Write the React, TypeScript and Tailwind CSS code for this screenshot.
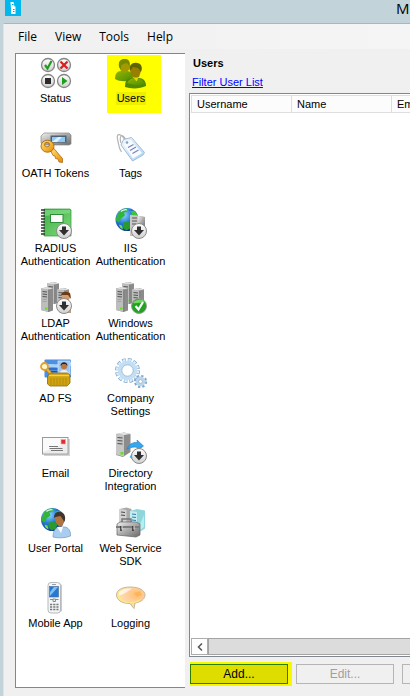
import type { ReactNode } from "react";

function Defs() {
  return (
    <svg width="0" height="0" className="absolute" aria-hidden="true">
      <defs>
        <linearGradient id="metal" x1="0" y1="0" x2="1" y2="1">
          <stop offset="0" stopColor="#f1f1f1" />
          <stop offset="0.5" stopColor="#a9a9a9" />
          <stop offset="1" stopColor="#6a6a6a" />
        </linearGradient>
        <linearGradient id="silver" x1="0" y1="0" x2="0" y2="1">
          <stop offset="0" stopColor="#ffffff" />
          <stop offset="1" stopColor="#cfcfcf" />
        </linearGradient>
        <linearGradient id="ice" x1="0" y1="0" x2="1" y2="1">
          <stop offset="0" stopColor="#f4faff" />
          <stop offset="1" stopColor="#a9d2f2" />
        </linearGradient>
        <linearGradient id="gold" x1="0" y1="0" x2="1" y2="1">
          <stop offset="0" stopColor="#ffe37a" />
          <stop offset="1" stopColor="#e88a00" />
        </linearGradient>
        <linearGradient id="book" x1="0" y1="0" x2="1" y2="1">
          <stop offset="0" stopColor="#3fae49" />
          <stop offset="1" stopColor="#7fdc78" />
        </linearGradient>
        <linearGradient id="shirt" x1="0" y1="0" x2="1" y2="1">
          <stop offset="0" stopColor="#8fb800" />
          <stop offset="1" stopColor="#4f8a00" />
        </linearGradient>
        <radialGradient id="ocean" cx="0.35" cy="0.3" r="0.75">
          <stop offset="0" stopColor="#8fd8ff" />
          <stop offset="0.5" stopColor="#2479d8" />
          <stop offset="1" stopColor="#0b2f87" />
        </radialGradient>
        <radialGradient id="speech" cx="0.7" cy="0.35" r="0.8">
          <stop offset="0" stopColor="#ffbf6b" />
          <stop offset="0.5" stopColor="#ffd2a6" />
          <stop offset="1" stopColor="#fdf48c" />
        </radialGradient>
      </defs>
    </svg>
  );
}

function Icon({ children }: { children: ReactNode }) {
  return (
    <svg viewBox="0 0 32 32" className="h-8 w-8 shrink-0" aria-hidden="true">
      {children}
    </svg>
  );
}

function DownBadge() {
  return (
    <g>
      <circle cx="24" cy="24" r="7.500" fill="url(#silver)" stroke="#8a8a8a" />
      <path d="M22 19.500h4V23h3l-5 5.500L19 23h3z" fill="#2f2f2f" />
    </g>
  );
}

function Server({ x, y, h }: { x: number; y: number; h: number }) {
  return (
    <g transform={`translate(${x} ${y})`}>
      <path d={`M0 1.500L7 0l5 1.500v${h - 3}L7.500 ${h}L0 ${h - 2}z`} fill="#8b8b8b" />
      <path d={`M0 1.500L7.500 2.500V${h}L0 ${h - 2}z`} fill="#bdbdbd" />
      <path d="M0 1.500L6 0l6 1.500l-4.500 1z" fill="#dedede" />
      <path d="M1.500 4.500l4.500.5M1.500 7l4.500.5M1.500 9.500l4.500.5" stroke="#555" strokeWidth="1.100" />
      <path d={`M7.700 2.500V${h}`} stroke="#666" strokeWidth="0.600" />
      <path d="M1.500 12.500h4M1.500 14.500h4" stroke="#9a9a9a" strokeWidth="0.800" />
      <rect x="4" y={h - 4.5} width="2.500" height="2" fill="#62e21c" />
    </g>
  );
}

function Globe({ cx, cy }: { cx: number; cy: number }) {
  return (
    <g transform={`translate(${cx} ${cy})`}>
      <circle r="11.500" fill="url(#ocean)" />
      <path d="M-9-6C-7-10-2-11.500 1-11L0-8l-3 1 1 3-4 3-2 4-3-2c-.5-2 0-4 2-5z" fill="#35b43a" />
      <path d="M3-8l4-1c3 2 4 5 4 8l-3 3-4-2-1-4 2-2z" fill="#43c23c" />
      <path d="M-4 3l5-1 4 3-2 4-4 2-3-3z" fill="#299b2e" />
      <path d="M-8 5l3 1 1 4-3-2z" fill="#6ede4d" />
      <path d="M-6-8C-4-10-1-10 0-9.500" fill="none" stroke="#d9ffd0" strokeWidth="1.200" />
    </g>
  );
}

const statusIcon = (
  <Icon>
    {[
      [8, 8],
      [24, 8],
      [8, 24],
      [24, 24],
    ].map(([x, y]) => (
      <circle key={`${x}-${y}`} cx={x} cy={y} r="6.500" fill="url(#silver)" stroke="#858585" strokeWidth="1.300" />
    ))}
    <path d="M5 8l2.500 3.500L11.500 4" fill="none" stroke="#239b1d" strokeWidth="2.200" />
    <path d="M20.500 4.500l7 7M27.500 4.500l-7 7" stroke="#d81f1f" strokeWidth="2.200" />
    <rect x="5" y="21" width="6" height="6" fill="#2b2b2b" />
    <path d="M22 20l5.500 4-5.500 4z" fill="#1fa01a" />
  </Icon>
);

const usersIcon = (
  <Icon>
    <path d="M0 22c0-5 2-8 6-8h6c4 0 6 3 6 8-5 3-13 3-18 0z" fill="url(#shirt)" />
    <path d="M4 9c0-5 2-7 5.500-7S15 4 15 9l-1 4-4 3-4-2z" fill="#a39a00" />
    <path d="M4 10c-1-6 2-8 6-8 4 0 5 3 4.500 7L12 6 8 7l-2 2v4z" fill="#758a00" />
    <path d="M10 30c0-6 2-9 6-9h8c5 0 7 4 7 8-6 3-15 3-21 1z" fill="#4f8a00" />
    <path d="M12 26c2-4 5-5 9-5 4 0 7 2 9 6-7 2-12 1-18-1z" fill="url(#shirt)" />
    <path d="M15 13c0-5 3-7 7-6 4 0 5 3 4 7l-2 6-4 2-4-4z" fill="#997f00" />
    <path d="M15 14c-2-6 3-9 7-8 4 0 6 4 4 9l-3-4-5-1z" fill="#5e6400" />
    <path d="M18.500 20.500l3 4 2-4z" fill="#d8e000" />
  </Icon>
);

const tokensIcon = (
  <Icon>
    <path d="M4 1h25l2 2v9l-2 1H3l-2-2V4z" fill="url(#metal)" stroke="#888" strokeWidth="0.700" />
    <rect x="10.500" y="3.500" width="16" height="7" fill="#4b6178" />
    <rect x="12" y="5" width="13" height="5" fill="#8ccaf5" />
    <path d="M12 10l6-5h4l-5 5z" fill="#d9f0ff" />
    <path d="M10.500 18.500L13.500 16l9 10.500v4l-3.500-.5-1-3-2.500-.5-.5-2.500-2-.5z" fill="url(#gold)" stroke="#a35f08" strokeWidth="0.700" />
    <path
      fillRule="evenodd"
      d="M1 14a6.500 6 0 1 1 13 .5A6.500 6 0 1 1 1 14zM4.500 12.500a2.500 2.200 0 1 0 5 .2 2.500 2.200 0 1 0-5-.2z"
      fill="url(#gold)"
      stroke="#a35f08"
      strokeWidth="0.800"
    />
  </Icon>
);

const tagsIcon = (
  <Icon>
    <path d="M10 8C6 1 1 1 2.500 7s1 9 4 13M11 8C7 0 4 4 6 11" fill="none" stroke="#b5b5b5" strokeWidth="1.200" />
    <path d="M6 13l2.500-5.500L16.500 5.500 29.500 20.500 28 23l-10.500 6z" fill="url(#ice)" stroke="#a3bdd8" />
    <path d="M9 13l1.500-3.500L15.500 8 27 21l-9 5.500z" fill="#f7fbff" />
    <circle cx="12" cy="10.500" r="1.300" fill="#8b9bb0" />
    <path d="M13 15.500l5.500-3M15 18.500l6-3.500M17.500 21.500l6-3.500" stroke="#7882b8" strokeWidth="1.100" />
  </Icon>
);

const radiusIcon = (
  <Icon>
    <path d="M4 2h26l1 1v26H4z" fill="url(#book)" stroke="#2f9a3a" strokeWidth="0.700" />
    <path d="M5 3h25v3L5 9z" fill="#8be08a" opacity="0.600" />
    <rect x="10.500" y="7.500" width="12.500" height="8" fill="#fff" stroke="#2b8d34" />
    <path d="M1 3h4M1 6h4M1 9h4M1 12h4M1 15h4M1 18h4M1 21h4M1 24h4M1 27h4" stroke="#333" strokeWidth="1.600" />
    <DownBadge />
  </Icon>
);

const iisIcon = (
  <Icon>
    <Globe cx={12} cy={12.5} />
    <path d="M15 8l15 2v18l-15 1z" fill="#8a8a8a" />
    <path d="M15 8l8 .5V28l-8 1z" fill="#c9c9c9" />
    <path d="M17 11h5M17 14h5M17 17h4" stroke="#555" strokeWidth="1.100" />
    <path d="M23 9l7 1v12l-7-1z" fill="url(#metal)" />
    <DownBadge />
  </Icon>
);

const serverGroup = (
  <g>
    <Server x={7} y={0} h={22} />
    <Server x={17} y={6} h={22} />
    <Server x={1} y={5} h={25} />
  </g>
);

const ldapIcon = (
  <Icon>
    {serverGroup}
    <circle cx="26" cy="14" r="4.500" fill="#d59b6a" />
    <path d="M21 13c1-4 5-4 9-2l1 6-3-4z" fill="#6b3b17" />
    <path d="M18 27c0-7 12-11 13 1v3H20z" fill="#bfa27c" />
    <DownBadge />
  </Icon>
);

const windowsIcon = (
  <Icon>
    {serverGroup}
    <circle cx="24" cy="24" r="7.500" fill="#21a321" stroke="#9c9c9c" />
    <path d="M18 21c2-4 9-5 12-1-4 0-8 2-12 1z" fill="#72d565" />
    <path d="M20.500 24l3 3.500L28 20" fill="none" stroke="#fff" strokeWidth="2.200" />
  </Icon>
);

const adfsIcon = (
  <Icon>
    <rect x="4.500" y="2.500" width="26.500" height="18" rx="1" fill="#4d8fe0" />
    <path d="M5 8c8-3 14 2 26-3v4c-9 4-18-1-26 3z" fill="#a9d1fa" />
    <path d="M9 12h9M9 14.500h9" stroke="#1f4fae" strokeWidth="1.200" />
    <rect x="18" y="4" width="12" height="14" fill="#9cc6f2" stroke="#d5e8fc" strokeWidth="0.700" />
    <path d="M19 18c0-4 3-5 5-5s5 1 5 5z" fill="#e9eff8" />
    <circle cx="24" cy="9" r="3.200" fill="#b87845" />
    <path d="M20.500 9c0-5 7-5 7 0l-2-2-3 0z" fill="#222" />
    <path d="M5 12l2-2 7 8-1 2-2-1z" fill="#f6b32b" stroke="#9a6a0a" strokeWidth="0.500" />
    <circle cx="4.500" cy="9.500" r="3.500" fill="#fff6cc" stroke="#e3a02a" strokeWidth="1.800" />
    <path d="M7.500 19l3-3h17l2.500 2v8l-3 3H10l-2.500-2z" fill="#cfa312" stroke="#8d6b06" strokeWidth="0.800" />
    <path d="M9 18.500h20" stroke="#f1d24a" strokeWidth="1.300" />
    <path d="M11 21v7M14 21v7M17 21v7M20 21v7M23 21v7M26 21v7" stroke="#b58e0b" />
  </Icon>
);

const settingsIcon = (
  <Icon>
    <circle cx="12.500" cy="13.500" r="10.500" fill="none" stroke="#83a9cc" strokeWidth="4" strokeDasharray="3.500 1.998" />
    <circle cx="12.500" cy="13.500" r="10.300" fill="none" stroke="#dcecfa" strokeWidth="2.800" strokeDasharray="2.500 2.893" strokeDashoffset="-0.500" />
    <circle cx="12.500" cy="13.500" r="7.700" fill="#fff" stroke="#c3dff5" strokeWidth="4" />
    <circle cx="12.500" cy="13.500" r="5.700" fill="#fff" stroke="#8eb0cf" strokeWidth="0.800" />
    <circle cx="25.500" cy="24.500" r="5.300" fill="none" stroke="#83a5c6" strokeWidth="2.600" strokeDasharray="2.200 1.963" />
    <circle cx="25.500" cy="24.500" r="3.600" fill="#fff" stroke="#b9d6ee" strokeWidth="2.600" />
    <circle cx="25.500" cy="24.500" r="2" fill="#fff" stroke="#7f9fbe" strokeWidth="0.700" />
  </Icon>
);

const emailIcon = (
  <Icon>
    <rect x="4" y="7" width="26" height="17" fill="#d4d4d4" />
    <rect x="2.500" y="5.500" width="25.500" height="16.500" fill="#fafafa" stroke="#999" />
    <path d="M3 20l24-9v10H3z" fill="#ececec" />
    <rect x="21" y="7.500" width="4.500" height="4.500" fill="#e02c2c" stroke="#f4a6a6" strokeWidth="0.700" />
    <path d="M9 14.500h9M9.500 16.500h13M11 18.500h12" stroke="#777" strokeWidth="1" />
  </Icon>
);

const directoryIcon = (
  <Icon>
    <path d="M1 2l8-1.500L15.500 2v18L8 25l-7-2z" fill="#8c8c8c" />
    <path d="M1 2l8 1v21.500L1 22.500z" fill="#c6c6c6" />
    <path d="M1 2l8-1.500L15.500 2 9 3z" fill="#e5e5e5" />
    <path d="M2.500 5.500l5 .5M2.500 8.500l5 .5M2.500 11.500l5 .5" stroke="#4f4f4f" strokeWidth="1.200" />
    <rect x="5.500" y="20" width="3" height="2.500" fill="#62e21c" />
    <path d="M12 17c2-5 6-7 10.500-6.500L22 8l6.500 6-6 4.500V15.500c-4-1-7 0-10.500 1.500z" fill="#35a7ef" stroke="#1b78c5" strokeWidth="0.600" />
    <path d="M18 28l-3.500-3 3.500-5z" fill="#4bb6f2" />
    <DownBadge />
  </Icon>
);

const portalIcon = (
  <Icon>
    <Globe cx={12.5} cy={12.5} />
    <path d="M13 30c0-7 3-10 7-10h4c5 0 7 5 6.500 9-5 2-12 2.500-17.500 1z" fill="#a8cdee" stroke="#6d98c4" strokeWidth="0.700" />
    <path d="M17 20l4 6 2-6z" fill="#fff" />
    <path d="M14.500 11c0-4 3-6 6-5.500s5 4 3.500 8l-1.500 5-3 1.500-3.500-4z" fill="#b2743f" />
    <path d="M14 11c0-5 3-7 7-6 4 1 5 6 3.500 10l-2-3-2-3-5 1z" fill="#3d3532" />
  </Icon>
);

const sdkIcon = (
  <Icon>
    <path d="M4.500 2l7-1.500 5 1.500v14h-12z" fill="#a9a9a9" />
    <path d="M4.500 2l7 1v13h-7z" fill="#d2d2d2" />
    <path d="M6 5l4 .5M6 8l4 .5" stroke="#4d4d4d" strokeWidth="1.200" />
    <path d="M15 4l7-2 8 1.500v18L23 26l-8-2z" fill="#8fd6da" />
    <path d="M15 4l7 1v20l-7-1z" fill="#c4edf0" />
    <path d="M17 7l4 .5M17 10l4 .5M17 13l4 .5" stroke="#2f7fa8" strokeWidth="1.200" />
    <path d="M24 20l5-12v12l-5 4z" fill="#b7eef0" />
    <path d="M7 15v-3h9v3" fill="none" stroke="#777" strokeWidth="1.500" />
    <path d="M2 17l3-2h16l4 2v11l-4 2-19-2z" fill="url(#metal)" stroke="#636363" strokeWidth="0.700" />
    <path d="M1 19h24v2H1z" fill="#7d7d7d" />
    <path d="M6 19v5M18 19v5" stroke="#333" strokeWidth="1.600" />
    <path d="M7 19v3.500M19 19v3.500" stroke="#f1f1f1" strokeWidth="0.900" />
  </Icon>
);

const mobileIcon = (
  <Icon>
    <path d="M20 2l2 1v26l-5 2.500z" fill="#c9c9c9" />
    <rect x="8" y="0.500" width="12.500" height="30.500" rx="3" fill="#f3f5f7" stroke="#b4babf" />
    <rect x="9.500" y="4.500" width="9" height="10.500" fill="#2479d8" stroke="#4c6a8c" strokeWidth="0.600" />
    <path d="M10 14v-4l4-5h4z" fill="#7fc0f5" />
    <path d="M12 2.500h4" stroke="#888" strokeWidth="0.800" />
    <path d="M10 17.500h3M15.500 17.500h3M13 17h2.500v2.500H13z" fill="none" stroke="#8a8a8a" />
    <path d="M10 22.500h8.500M10 25h8.500M10 27.500h8.500" stroke="#777" strokeWidth="1.400" strokeDasharray="2.200 1" />
  </Icon>
);

const loggingIcon = (
  <Icon>
    <path
      d="M15.500 5C24 5 30 8.500 30 13c0 4-4 7-10 8l-1 5.500-4-5C7 21.500 1.500 18 1.500 13S7 5 15.500 5z"
      fill="url(#speech)"
      stroke="#c5b79c"
    />
    <path d="M4 11c2-4 8-5 13-4.500-3 2-8 6-13 7z" fill="#fff" opacity="0.700" />
    <path d="M4 17c6 4 15 5 22 0-3 4-7 3.500-8 4l-3 0c-5 0-9-2-11-4z" fill="#fdf57c" />
    <path d="M19 11l6-2 2 4-5 2z" fill="#ffa94a" opacity="0.600" />
  </Icon>
);

const sections: { lines: string[]; icon: ReactNode; selected?: boolean }[] = [
  { lines: ["Status"], icon: statusIcon },
  { lines: ["Users"], icon: usersIcon, selected: true },
  { lines: ["OATH Tokens"], icon: tokensIcon },
  { lines: ["Tags"], icon: tagsIcon },
  { lines: ["RADIUS", "Authentication"], icon: radiusIcon },
  { lines: ["IIS", "Authentication"], icon: iisIcon },
  { lines: ["LDAP", "Authentication"], icon: ldapIcon },
  { lines: ["Windows", "Authentication"], icon: windowsIcon },
  { lines: ["AD FS"], icon: adfsIcon },
  { lines: ["Company", "Settings"], icon: settingsIcon },
  { lines: ["Email"], icon: emailIcon },
  { lines: ["Directory", "Integration"], icon: directoryIcon },
  { lines: ["User Portal"], icon: portalIcon },
  { lines: ["Web Service", "SDK"], icon: sdkIcon },
  { lines: ["Mobile App"], icon: mobileIcon },
  { lines: ["Logging"], icon: loggingIcon },
];

function SectionButton({ lines, icon, selected }: (typeof sections)[number]) {
  return (
    <button
      type="button"
      className={
        selected
          ? "mr-[7px] flex h-[58px] w-[54px] flex-col items-center gap-[3px] justify-self-end bg-[#ffff00] pt-[2px] pr-[6px]"
          : "flex h-[75px] w-full flex-col items-center gap-[3px] pt-[2px]"
      }
    >
      {icon}
      <span className={selected ? "bg-[#eeee00] px-[1px] leading-[13px]" : "leading-[13px]"}>
        {lines.map((line) => (
          <span key={line} className="block whitespace-nowrap">
            {line}
          </span>
        ))}
      </span>
    </button>
  );
}

export default function App() {
  return (
    <div className="flex min-h-screen flex-col overflow-hidden bg-[#c2d4da] pl-[3px] font-['Liberation_Sans',Arial,sans-serif] text-[11px] text-black">
      <Defs />
      <header className="flex h-[23px] items-start justify-between pl-[2px]">
        <svg viewBox="0 0 16 16" className="h-4 w-4" aria-hidden="true">
          <rect width="16" height="16" fill="#00b7ef" />
          <path d="M5.500 2h3l1 4.500h1V14H6V9z" fill="#fff" />
          <path d="M7 4.500h1.500M8 9.500h1.500M8 11.500h1.500" stroke="#00a0dc" />
        </svg>
        <span className="w-[14px] font-['Open_Sans',sans-serif] text-[15px] leading-4">M</span>
      </header>

      <div className="flex flex-1 flex-col border-t border-l border-t-[#a9b6bb] border-l-[#dfe5e7] bg-[#f0f0f0]">
        <nav className="flex h-[25px] items-center gap-[18px] bg-linear-to-r from-[#f0f0f0] to-[#f5f5f5] pl-[14px] font-['Open_Sans',sans-serif] text-[12px]">
          <button type="button">File</button>
          <button type="button">View</button>
          <button type="button">Tools</button>
          <button type="button">Help</button>
        </nav>

        <div className="flex flex-1 gap-1 pt-1 pb-2 pl-[11px]">
          <aside className="w-[170px] shrink-0 border-y border-l border-[#82878f] bg-white pt-[1px] pl-[2px]">
            <div className="grid w-[150px] grid-cols-2">
              {sections.map((section) => (
                <SectionButton key={section.lines.join(" ")} {...section} />
              ))}
            </div>
          </aside>

          <main className="flex min-w-0 flex-1 flex-col pb-[2px]">
            <h1 className="pt-[3px] pl-1 leading-[14px] font-bold">Users</h1>
            <div className="mb-1 pt-[5px] pl-[3px] leading-[14px]">
              <a href="#filter" className="text-[#0000ff] underline">
                Filter User List
              </a>
            </div>

            <div className="flex flex-1 flex-col border-y border-l border-[#82878f] bg-white p-[1px] pr-0">
              <div className="flex-1 overflow-hidden">
                <table className="w-[300px] table-fixed border-collapse">
                  <thead>
                    <tr className="h-[17px]">
                      {["Username", "Name", "Em"].map((name) => (
                        <th
                          key={name}
                          className="w-[100px] border border-[#dedede] bg-[#fcfcfc] p-0 pl-[5px] text-left leading-[15px] font-normal"
                        >
                          {name}
                        </th>
                      ))}
                    </tr>
                  </thead>
                </table>
              </div>
              <div className="flex h-[17px]">
                <button
                  type="button"
                  aria-label="Scroll left"
                  className="flex w-[17px] items-center justify-center border border-[#acacac] bg-white"
                >
                  <svg viewBox="0 0 6 8" className="h-2 w-[6px]" aria-hidden="true">
                    <path d="M5 .5L1.500 4 5 7.500" fill="none" stroke="#555" strokeWidth="1.500" />
                  </svg>
                </button>
                <div className="flex-1 border-y border-l border-[#a3a3a3] bg-[#dcdcdc]" />
              </div>
            </div>

            <div className="mt-[5px] flex overflow-hidden pl-[1px]">
              <div className="mr-1 shrink-0 bg-[#f7f700] py-[2px] pr-1">
                <button type="button" className="h-5 w-[98px] border border-[#2f7d00] bg-[#dddd00] text-[12px] leading-[18px]">
                  Add...
                </button>
              </div>
              <button
                type="button"
                disabled
                className="my-[2px] mr-2 h-5 w-[98px] shrink-0 border border-[#b5b5b5] text-[12px] leading-[18px] text-[#a0a0a0]"
              >
                Edit...
              </button>
              <button
                type="button"
                disabled
                aria-label="Delete"
                className="my-[2px] h-5 w-[98px] shrink-0 border border-[#b5b5b5]"
              />
            </div>
          </main>
        </div>
      </div>
    </div>
  );
}
